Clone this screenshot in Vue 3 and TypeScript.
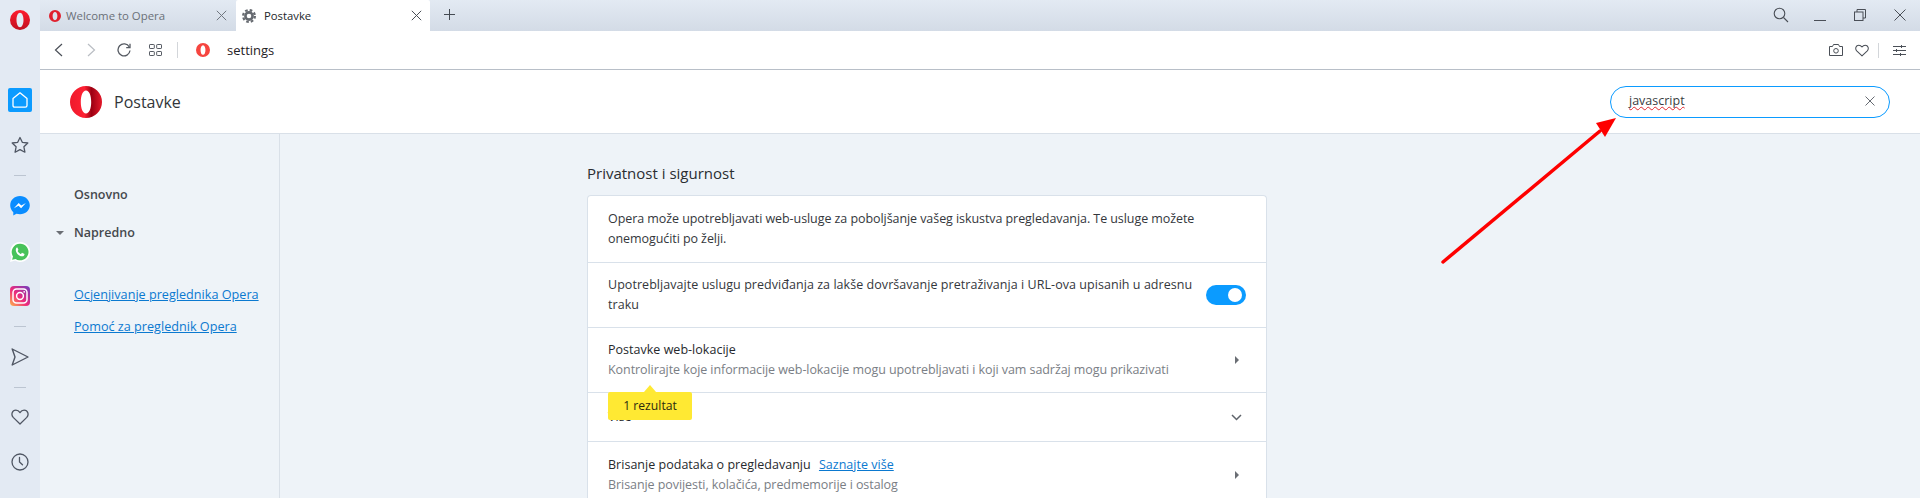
<script setup lang="ts">
const settingsRows = [
  { title: 'Postavke web-lokacije', sub: 'Kontrolirajte koje informacije web-lokacije mogu upotrebljavati i koji vam sadržaj mogu prikazivati' },
]
</script>

<template>
  <div class="app">
    <svg class="defs" width="0" height="0" aria-hidden="true">
      <defs>
        <linearGradient id="opera" x1="0" y1="0" x2="0" y2="1">
          <stop offset="0" stop-color="#ff1b2d" />
          <stop offset="1" stop-color="#c0101f" />
        </linearGradient>
        <linearGradient id="operaShade" x1="0" y1="0" x2="1" y2="0">
          <stop offset="0" stop-color="#ee1a2c" />
          <stop offset=".45" stop-color="#ff2133" />
          <stop offset=".67" stop-color="#9c0012" />
          <stop offset="1" stop-color="#e3182a" />
        </linearGradient>
        <linearGradient id="insta" x1="0" y1="1" x2="1" y2="0">
          <stop offset="0" stop-color="#fdb44b" />
          <stop offset=".45" stop-color="#ee2a7b" />
          <stop offset="1" stop-color="#6d3fc0" />
        </linearGradient>
      </defs>
    </svg>

    <aside class="rail">
      <svg class="rail-logo" width="20" height="20" viewBox="0 0 32 32">
        <path fill="url(#opera)" fill-rule="evenodd" d="M16 0a16 16 0 1 0 0 32a16 16 0 1 0 0-32zM16 4.500c3.400 0 5.600 5 5.600 11.500S19.400 27.500 16 27.500S10.400 22.500 10.400 16S12.600 4.500 16 4.500z" />
      </svg>
      <div class="rail-home">
        <svg width="18" height="18" viewBox="0 0 18 18" fill="none" stroke="#fff" stroke-width="1.300">
          <path d="M9 1.800 L16 7.600 V14.500 Q16 16.200 14.300 16.200 H3.700 Q2 16.200 2 14.500 V7.600 Z" stroke-linejoin="round" />
        </svg>
      </div>
      <svg class="rail-star" width="18" height="18" viewBox="0 0 18 18" fill="none" stroke="#4f5663" stroke-width="1.300" stroke-linejoin="round">
        <path d="M9 1.500 L11.300 6.300 L16.800 7 L12.900 10.800 L13.900 16.200 L9 13.600 L4.100 16.200 L5.100 10.800 L1.200 7 L6.700 6.300 Z" />
      </svg>
      <div class="rail-sep sep-1"></div>
      <svg class="rail-msg" width="20" height="20" viewBox="0 0 20 20">
        <path fill="#0a8dff" d="M10 0C4.500 0 .2 4 .2 9.300c0 2.800 1.200 5.200 3.100 6.900v3.300l3.100-1.700c1.100.3 2.300.5 3.600.5c5.500 0 9.800-4 9.800-9S15.500 0 10 0z" />
        <path fill="#fff" d="M3.900 12.200 L8.700 7 L11.300 9.400 L15.900 7 L11.100 12.200 L8.500 9.800 Z" />
      </svg>
      <svg class="rail-wa" width="20" height="20" viewBox="0 0 20 20">
        <path fill="#fff" d="M10 0a10 10 0 0 0-8.600 15L0 20l5.200-1.400A10 10 0 1 0 10 0z" />
        <path fill="#48c35a" d="M10 1.700a8.300 8.300 0 0 0-7 12.700l-.9 3.400 3.500-.9A8.300 8.300 0 1 0 10 1.700z" />
        <path fill="#fff" d="M7.200 5.600c-.4 0-1.400.6-1.400 2.300c0 3 3.300 6.400 6.300 6.400c1.500 0 2.400-1 2.400-1.800c0-.5-.1-.6-.4-.8l-1.700-.8c-.3-.1-.5 0-.7.2l-.6.8c-.2.200-.4.200-.6.100c-1.200-.6-2.200-1.500-2.800-2.700c-.1-.2 0-.4.100-.5l.5-.7c.1-.2.100-.4 0-.6l-.7-1.600c-.1-.2-.2-.3-.4-.3z" />
      </svg>
      <svg class="rail-ig" width="20" height="20" viewBox="0 0 20 20">
        <rect width="20" height="20" rx="4" fill="url(#insta)" />
        <rect x="3" y="3" width="14" height="14" rx="3.500" fill="none" stroke="#fff" stroke-width="1.500" />
        <circle cx="10" cy="10" r="3.400" fill="none" stroke="#fff" stroke-width="1.500" />
        <circle cx="14.200" cy="5.800" r=".9" fill="#fff" />
      </svg>
      <div class="rail-sep sep-2"></div>
      <svg class="rail-send" width="18" height="18" viewBox="0 0 18 18" fill="none" stroke="#4f5663" stroke-width="1.400" stroke-linejoin="round">
        <path d="M1.200 1 L17 9 L1.200 17 L4 9 Z" />
      </svg>
      <div class="rail-sep sep-3"></div>
      <svg class="rail-heart" width="18" height="16" viewBox="0 0 18 16" fill="none" stroke="#4f5663" stroke-width="1.300" stroke-linejoin="round">
        <path d="M9 15 L2.200 8.400 C-.2 5.800 1 1.200 4.900 1.200 C6.700 1.200 8 2.100 9 3.600 C10 2.100 11.300 1.200 13.100 1.200 C17 1.200 18.200 5.800 15.800 8.400 Z" />
      </svg>
      <svg class="rail-clock" width="18" height="18" viewBox="0 0 18 18" fill="none" stroke="#4f5663" stroke-width="1.300">
        <circle cx="9" cy="9" r="8" />
        <path d="M8.500 4.500 V9 L11.500 11.800" stroke-linecap="round" />
      </svg>
    </aside>

    <div class="main">
      <div class="tabstrip">
        <div class="tab tab-inactive">
          <svg width="12" height="12" viewBox="0 0 32 32">
            <path fill="#e0202e" fill-rule="evenodd" d="M16 0a16 16 0 1 0 0 32a16 16 0 1 0 0-32zM16 5c4 0 6.400 5 6.400 11S20 27 16 27S9.600 22 9.600 16S12 5 16 5z" />
          </svg>
          <span class="tab-title">Welcome to Opera</span>
          <svg class="tab-x" width="11" height="11" viewBox="0 0 11 11" stroke="#70767f" stroke-width="1"><path d="M.8.800 10.200 10.200M10.200.8.800 10.200" /></svg>
        </div>
        <div class="tab tab-active">
          <svg width="14" height="14" viewBox="0 0 14 14" fill="none" stroke="#666a70">
            <circle cx="7" cy="7" r="3.600" stroke-width="2.600" />
            <circle cx="7" cy="7" r="5.900" stroke-width="2.200" stroke-dasharray="2.600 2.030" />
          </svg>
          <span class="tab-title">Postavke</span>
          <svg class="tab-x" width="11" height="11" viewBox="0 0 11 11" stroke="#4a4f57" stroke-width="1"><path d="M.8.800 10.200 10.200M10.200.8.800 10.200" /></svg>
        </div>
        <svg class="tab-plus" width="11" height="11" viewBox="0 0 11 11" stroke="#444a52" stroke-width="1"><path d="M5.500 0V11M0 5.500H11" /></svg>
        <div class="win-controls">
          <svg width="16" height="16" viewBox="0 0 16 16" fill="none" stroke="#4a4f57" stroke-width="1.100"><circle cx="6.500" cy="6.500" r="5.300" /><path d="M10.500 10.500 15 15" /></svg>
          <svg class="win-min" width="12" height="12" viewBox="0 0 12 12" stroke="#4a4f57" stroke-width="1"><path d="M0 11.500H12" /></svg>
          <svg width="12" height="12" viewBox="0 0 12 12" fill="none" stroke="#4a4f57" stroke-width="1"><rect x=".5" y="3" width="8.500" height="8.500" /><path d="M3 3V.5H11.500V9H9" /></svg>
          <svg width="12" height="12" viewBox="0 0 12 12" stroke="#4a4f57" stroke-width="1"><path d="M.5.500 11.500 11.500M11.500.5.500 11.500" /></svg>
        </div>
      </div>

      <div class="toolbar">
        <svg class="tb-back" width="9" height="14" viewBox="0 0 9 14" fill="none" stroke="#4a4f57" stroke-width="1.200"><path d="M8 1 1.500 7 8 13" /></svg>
        <svg class="tb-forward" width="9" height="14" viewBox="0 0 9 14" fill="none" stroke="#b9bdc3" stroke-width="1.200"><path d="M1 1 7.500 7 1 13" /></svg>
        <svg class="tb-reload" width="14" height="14" viewBox="0 0 14 14" fill="none" stroke="#555a62" stroke-width="1.300"><path d="M12.300 4A6 6 0 1 0 13 7.500" /><path d="M13 .8V4.600H9.200" fill="none" /></svg>
        <svg class="tb-grid" width="13" height="12" viewBox="0 0 13 12" fill="none" stroke="#555a62" stroke-width="1"><rect x=".5" y=".5" width="4.800" height="4" rx=".6" /><rect x="7.700" y=".5" width="4.800" height="4" rx=".6" /><rect x=".5" y="7.500" width="4.800" height="4" rx=".6" /><rect x="7.700" y="7.500" width="4.800" height="4" rx=".6" /></svg>
        <div class="tb-sep"></div>
        <svg class="tb-logo" width="14" height="14" viewBox="0 0 32 32">
          <path fill="#f6453f" fill-rule="evenodd" d="M16 0a16 16 0 1 0 0 32a16 16 0 1 0 0-32zM16 5c3.600 0 5.600 5 5.600 11S19.600 27 16 27S10.400 22 10.400 16S12.400 5 16 5z" />
        </svg>
        <span class="tb-url">settings</span>
        <div class="tb-right">
          <svg width="14" height="12" viewBox="0 0 14 12" fill="none" stroke="#4a4f57" stroke-width="1"><path d="M.5 2.500H3.500L4.500.5H9.500L10.500 2.500H13.500V11.500H.5Z" /><circle cx="7" cy="6.800" r="2.300" /></svg>
          <svg class="tb-heart" width="14" height="13" viewBox="0 0 18 16" fill="none" stroke="#4a4f57" stroke-width="1.300" stroke-linejoin="round"><path d="M9 15 L2.200 8.400 C-.2 5.800 1 1.200 4.900 1.200 C6.700 1.200 8 2.100 9 3.600 C10 2.100 11.300 1.200 13.100 1.200 C17 1.200 18.200 5.800 15.800 8.400 Z" /></svg>
          <div class="tb-sep2"></div>
          <svg class="tb-sliders" width="13" height="11" viewBox="0 0 13 11" stroke="#4a4f57" stroke-width="1"><path d="M0 1.500H13M0 5.500H13M0 9.500H13" /><path d="M8.500 0V3M3.500 4V7M7.500 8V11" /></svg>
        </div>
      </div>

      <header class="page-header">
        <svg class="header-logo" width="32" height="32" viewBox="0 0 32 32">
          <path fill="url(#operaShade)" fill-rule="evenodd" d="M16 0a16 16 0 1 0 0 32a16 16 0 1 0 0-32zM16 4.500c3.200 0 5.200 5 5.200 11.500S19.200 27.500 16 27.500S10.800 22.500 10.800 16S12.800 4.500 16 4.500z" />
        </svg>
        <span class="header-title">Postavke</span>
        <div class="search">
          <span class="search-text">javascript</span>
          <svg width="10" height="10" viewBox="0 0 10 10" stroke="#666b72" stroke-width="1"><path d="M.5.500 9.500 9.500M9.500.5.500 9.500" /></svg>
        </div>
      </header>

      <div class="body">
        <nav class="nav">
          <div class="nav-item">Osnovno</div>
          <div class="nav-item nav-adv"><i class="nav-caret"></i>Napredno</div>
          <a class="nav-link first">Ocjenjivanje preglednika Opera</a>
          <a class="nav-link">Pomoć za preglednik Opera</a>
        </nav>

        <section class="content">
          <h2 class="section-title">Privatnost i sigurnost</h2>
          <div class="card">
            <div class="row row-1">
              <div>Opera može upotrebljavati web-usluge za poboljšanje vašeg iskustva pregledavanja. Te usluge možete<br />onemogućiti po želji.</div>
            </div>
            <div class="row row-2">
              <div>Upotrebljavajte uslugu predviđanja za lakše dovršavanje pretraživanja i URL-ova upisanih u adresnu<br />traku</div>
              <span class="toggle"><span class="knob"></span></span>
            </div>
            <div v-for="r in settingsRows" :key="r.title" class="row row-3">
              <div>
                <div class="row-title">{{ r.title }}</div>
                <div class="row-sub">{{ r.sub }}</div>
              </div>
              <i class="tri"></i>
            </div>
            <div class="row row-4">
              <div class="row-title">Više</div>
              <svg class="chev" width="11" height="7" viewBox="0 0 11 7" fill="none" stroke="#5f646b" stroke-width="1.500"><path d="M1 1 5.500 5.500 10 1" /></svg>
              <div class="hint">1 rezultat</div>
            </div>
            <div class="row row-5">
              <div>
                <div class="row-title">Brisanje podataka o pregledavanju <a class="more">Saznajte više</a></div>
                <div class="row-sub">Brisanje povijesti, kolačića, predmemorije i ostalog</div>
              </div>
              <i class="tri"></i>
            </div>
          </div>
        </section>
      </div>
    </div>

    <svg class="annot" width="200" height="160" viewBox="0 0 200 160">
      <path d="M5 151 L162 20" stroke="#fe0000" stroke-width="3.500" stroke-linecap="round" />
      <path d="M178 7 L167 26 L158 12 Z" fill="#fe0000" />
    </svg>
  </div>
</template>

<style>
html, body { margin: 0; background: #eef3f8; }
</style>

<style scoped>
.app {
  position: relative;
  display: flex;
  width: 1920px;
  height: 498px;
  overflow: hidden;
  background: #eef3f8;
  font-family: "Open Sans", "Noto Sans", sans-serif;
  font-size: 12px;
  color: #2f3338;
}
.defs { position: absolute; }

.rail {
  flex: 0 0 40px;
  display: flex;
  flex-direction: column;
  align-items: center;
  background: #e3eaf3;
}
.rail > * { flex: none; }
.rail-logo { margin-top: 10px; }
.rail-home {
  margin-top: 58px;
  width: 24px;
  height: 24px;
  border-radius: 2px;
  background: #0b9bff;
  display: flex;
  align-items: center;
  justify-content: center;
}
.rail-star { margin-top: 24px; }
.rail-sep { width: 12px; height: 1px; background: #bcc5d1; }
.sep-1 { margin-top: 21px; }
.rail-msg { margin-top: 20px; }
.rail-wa { margin-top: 26px; }
.rail-ig { margin-top: 24px; }
.sep-2 { margin-top: 20px; }
.rail-send { margin-top: 21px; }
.sep-3 { margin-top: 21px; }
.rail-heart { margin-top: 21px; }
.rail-clock { margin-top: 28px; }

.main { flex: 1; display: flex; flex-direction: column; min-width: 0; }

.tabstrip {
  flex: 0 0 31px;
  display: flex;
  align-items: stretch;
  background: linear-gradient(#e3eaf3, #d3dbe6);
}
.tab {
  display: flex;
  align-items: center;
  height: 31px;
  box-sizing: border-box;
}
.tab-inactive {
  width: 196px;
  padding: 0 9px;
  color: #6b7078;
}
.tab-inactive .tab-title { margin-left: 5px; font-size: 11.400px; }
.tab-active {
  width: 194px;
  padding: 0 8px 0 6px;
  background: #fff;
  border-radius: 2px 2px 0 0;
  color: #24272b;
}
.tab-active .tab-title { margin-left: 8px; font-size: 11.300px; }
.tab-title { flex: 1; white-space: nowrap; }
.tab-x { flex: none; }
.tab-plus { align-self: center; margin-left: 14px; margin-top: -2px; }
.win-controls {
  margin-left: auto;
  display: flex;
  align-items: center;
  padding-right: 14px;
  padding-bottom: 2px;
}
.win-controls svg + svg { margin-left: 28px; }
.win-controls .win-min { margin-left: 25px; }

.toolbar {
  flex: 0 0 38px;
  display: flex;
  align-items: center;
  background: #fff;
  border-bottom: 1px solid #b8bfc8;
  padding-left: 14px;
  padding-right: 14px;
}
.toolbar > * { flex: none; }
.tb-forward { margin-left: 24px; }
.tb-reload { margin-left: 21px; }
.tb-grid { margin-left: 18px; }
.tb-sep { width: 1px; height: 16px; background: #d3d6da; margin-left: 15px; }
.tb-logo { margin-left: 18px; }
.tb-url { margin-left: 17px; font-size: 13px; color: #1f2226; }
.tb-right { margin-left: auto; display: flex; align-items: center; }
.tb-heart { margin-left: 12px; }
.tb-sep2 { width: 1px; height: 15px; background: #d3d6da; margin-left: 9px; }
.tb-sliders { margin-left: 14px; }

.page-header {
  flex: 0 0 63px;
  display: flex;
  align-items: center;
  background: #fff;
  border-bottom: 1px solid #d9e0e8;
  padding-left: 30px;
  padding-right: 30px;
}
.header-logo { flex: none; }
.header-title { margin-left: 12px; margin-top: 1px; font-size: 16px; color: #33363a; }
.search {
  margin-left: auto;
  width: 280px;
  height: 32px;
  box-sizing: border-box;
  border: 1px solid #0b9bff;
  border-radius: 16px;
  display: flex;
  align-items: center;
  justify-content: space-between;
  padding: 0 14px 2px 18px;
}
.search-text {
  font-size: 12.500px;
  color: #3a3d42;
  text-decoration: underline wavy #e0282e 1px;
  text-underline-offset: 1px;
  text-decoration-skip-ink: none;
}

.body { flex: 1; display: flex; min-height: 0; background: #eef3f8; }
.nav {
  flex: 0 0 240px;
  box-sizing: border-box;
  width: 240px;
  border-right: 1px solid #d9e0e8;
  padding: 52px 0 0 34px;
  position: relative;
}
.nav-item { font-size: 12.500px; font-weight: 600; color: #45484d; line-height: 18px; }
.nav-adv { position: relative; margin-top: 20px; }
.nav-caret {
  position: absolute;
  left: -18px;
  top: 7px;
  border-left: 4px solid transparent;
  border-right: 4px solid transparent;
  border-top: 4px solid #6a6e74;
}
.nav-link {
  display: block;
  margin-top: 14px;
  font-size: 12.650px;
  line-height: 18px;
  color: #0b79d0;
  text-decoration: underline;
}
.nav-link.first { margin-top: 43px; }

.content { margin-left: 307px; width: 680px; flex: none; }
.section-title { margin: 29px 0 12px; font-size: 15px; font-weight: 400; line-height: 20px; color: #2a2d31; }
.card {
  background: #fff;
  border: 1px solid #d9e1ea;
  border-bottom: 0;
  border-radius: 4px 4px 0 0;
  box-sizing: border-box;
}
.row {
  position: relative;
  display: flex;
  align-items: center;
  justify-content: space-between;
  box-sizing: border-box;
  padding: 0 20px;
  line-height: 20px;
  border-bottom: 1px solid #d9e1ea;
  font-size: 12.500px;
  color: #34373c;
}
.row-1 { height: 67px; letter-spacing: -.07px; }
.row-2 { height: 65px; letter-spacing: .05px; }
.row-3 { height: 65px; }
.row-4 { height: 49px; }
.row-5 { height: 66px; border-bottom: 0; }
.row-title { color: #26292d; letter-spacing: .02px; }
.row-sub { color: #7a7e85; letter-spacing: -.07px; }
.toggle {
  flex: none;
  width: 40px;
  height: 20px;
  border-radius: 10px;
  background: #0b9bff;
  display: flex;
  align-items: center;
  justify-content: flex-end;
  padding-right: 4px;
  box-sizing: border-box;
}
.knob { width: 14px; height: 14px; border-radius: 50%; background: #fff; }
.tri {
  flex: none;
  margin-right: 7px;
  border-top: 4px solid transparent;
  border-bottom: 4px solid transparent;
  border-left: 4px solid #6a6e74;
}
.chev { margin-right: 4px; }
.more { color: #0b79d0; text-decoration: underline; margin-left: 5px; }
.hint {
  position: absolute;
  left: 20px;
  top: -1px;
  width: 84px;
  height: 28px;
  background: #ffe933;
  border-radius: 2px;
  text-align: center;
  line-height: 28px;
  font-size: 12.200px;
  color: #2c2a10;
}
.hint::before {
  content: "";
  position: absolute;
  left: 36px;
  top: -7px;
  border-left: 6px solid transparent;
  border-right: 6px solid transparent;
  border-bottom: 7px solid #ffe933;
}

.annot { position: absolute; left: 1438px; top: 111px; }
</style>
